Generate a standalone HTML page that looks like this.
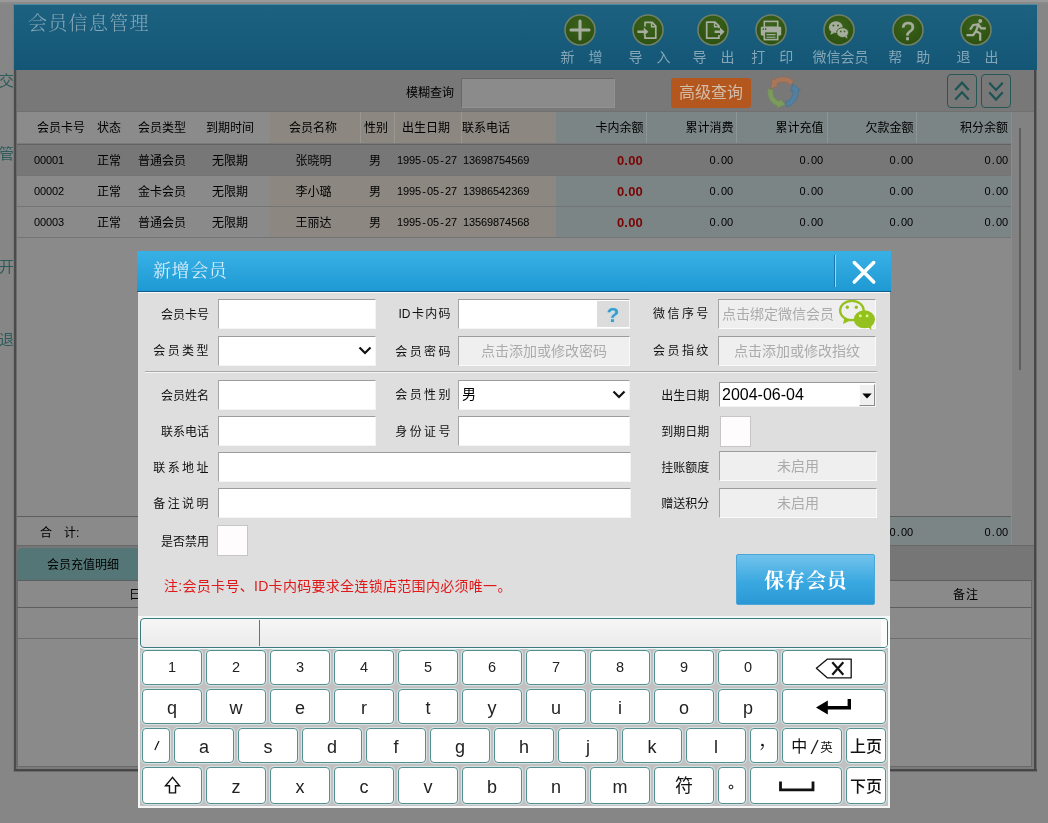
<!DOCTYPE html>
<html lang="zh-CN">
<head>
<meta charset="utf-8">
<title>会员信息管理</title>
<style>
*{box-sizing:border-box;margin:0;padding:0}
html,body{width:1048px;height:823px;overflow:hidden}
#win,#modal,#side{will-change:transform}
body{position:relative;background:#868686;font-family:"Liberation Sans","Noto Sans CJK SC",sans-serif;font-size:12px;color:#000}
.abs,.abs>div,.abs>span,.row>div{position:absolute}

#topstrip{left:0;top:0;width:1048px;height:4px;background:linear-gradient(#9b9b9b,#999 40%,#8b8b8b 55%,#8a8a8a)}
#side span{position:absolute;left:0;color:#2d5b5b;font-size:15px;line-height:20px;margin-top:-1px;margin-left:-1px}
#win{left:13px;top:4px;width:1024px;height:768px;background:#7b7b7b}
#hdr{left:0;top:0;width:1024px;height:66px;background:linear-gradient(#1d6181,#135676);border-left:1px solid #4f88a3;border-top:1px solid #4f88a3}
#hdr .title{left:14px;top:5px;letter-spacing:1.3px;font-family:"Liberation Serif","Noto Serif CJK SC",serif;font-weight:300;font-size:19px;line-height:28px;color:#86a8b8;white-space:nowrap}
.tb{position:absolute;top:9px;margin-left:-1px;width:80px;text-align:center;color:#84a6b6;white-space:nowrap}
.tb svg{display:block;margin:0 auto;width:32px;height:32px}
.tb .lb{display:block;margin-top:2px;line-height:18px;font-size:14px;padding-left:2px}
#lborder{left:1px;top:66px;width:3px;height:701px;background:linear-gradient(90deg,#4e4e4e,#494949 66%,#6c6c6c 67%)}
#rborder{left:1021px;top:66px;width:3px;height:702px;background:linear-gradient(90deg,#4a4a4a,#444 66%,#6a6a6a 67%)}
#bborder{left:1px;top:765px;width:1023px;height:3px;background:linear-gradient(#4a4a4a,#444 66%,#6a6a6a 67%)}
#bar{left:4px;top:66px;width:1017px;height:41px;background:#787878}
#grid{left:4px;top:107px;width:994px;height:434px;background:#8a8a8a}
.th{top:0;height:34px;line-height:34px;font-size:12px;white-space:nowrap}
.hl{top:0;width:1px;height:32px;background:#999}
.row{left:0;width:994px;height:31px}
.cell{top:1px;height:31px;line-height:31px;white-space:nowrap;font-size:12px}
.r{text-align:right}.c{text-align:center}
.cell.num,.num{font-family:"Liberation Sans","Noto Sans CJK SC",sans-serif;font-size:11px;letter-spacing:-0.1px;color:#000}
.num i{font-style:normal;padding:0 1.2px}
.row>.cell.num{line-height:29px}
/* modal */
#modal{left:137px;top:251px;width:754px;height:557px}
#mbody{left:1px;top:41px;width:752px;height:516px;background:#dedede;border-top:1.5px solid #fafafa}
#mtitle{left:0;top:0;width:754px;height:41px;background:linear-gradient(#37b1e5,#1f99d3);border-bottom:1px solid #115a8a}
#mtitle .t{left:16px;top:7px;letter-spacing:.6px;font-family:"Liberation Serif","Noto Serif CJK SC",serif;font-size:18px;line-height:26px;color:#d8effb}
.lab{height:30px;line-height:30px;font-size:12px;text-align:right;white-space:nowrap;color:#111}
.sp{letter-spacing:2.3px;margin-right:-2.3px}
.inp{height:30px;background:#fff;border:1px solid;border-color:#9c9c9c #f4f4f4 #f4f4f4 #a6a6a6}
.dis{height:30px;background:#efefef;border:1px solid;border-color:#9c9c9c #fafafa #fafafa #a6a6a6;color:#ababab;font-size:14px;line-height:28px;text-align:center;white-space:nowrap}
.chk{width:31px;height:31px;background:#fefcfd;border:1px solid #c6c6c6}
#kb>.key{background:#fff;border:1px solid #528f8f;border-radius:4px;text-align:center;font-size:18px;color:#222;padding-top:2px;box-shadow:0 0 0 1px rgba(235,252,252,.55)}
#kb>.key.dg{font-size:14.5px;padding-top:0}
#kb>.key.cj{padding-top:1px;font-size:16px;font-family:"Liberation Sans","Noto Sans CJK SC",sans-serif;color:#111}
#kb>.key.pg{font-size:16px;font-weight:500}
#kb>.key.fu{font-size:18px}
.key span{position:static}
</style>
</head>
<body>
<div id="topstrip" class="abs"></div>
<div id="side"><span style="top:72px">交</span><span style="top:145px">管</span><span style="top:258px">开</span><span style="top:331px">退</span></div>
<div id="win" class="abs">
<div id="hdr" class="abs"><div class="title">会员信息管理</div>
<div class="tb" style="left:527.4px"><svg viewBox="0 0 32 32"><defs><radialGradient id="gg" cx="50%" cy="35%" r="70%"><stop offset="0" stop-color="#3b631a"/><stop offset="1" stop-color="#2c4f10"/></radialGradient></defs><circle cx="16" cy="16" r="15" fill="url(#gg)" stroke="#6f8066" stroke-width="1.6"/><path d="M16 7v18M7 16h18" stroke="#a7ae9f" stroke-width="3.1" stroke-linecap="round" fill="none"/></svg><span class="lb">新　增</span></div>
<div class="tb" style="left:595.4px"><svg viewBox="0 0 32 32"><defs><radialGradient id="gg" cx="50%" cy="35%" r="70%"><stop offset="0" stop-color="#3b631a"/><stop offset="1" stop-color="#2c4f10"/></radialGradient></defs><circle cx="16" cy="16" r="15" fill="url(#gg)" stroke="#6f8066" stroke-width="1.6"/><path d="M13 12.5V8.3h7.2l3.6 3.9v12H13V21" fill="none" stroke="#a7ae9f" stroke-width="1.7" stroke-linejoin="round"/><path d="M19.6 8.6v4.2h3.9" fill="none" stroke="#a7ae9f" stroke-width="1.5"/><path d="M5.4 16.4h6.4v-2.9l4.6 4.2-4.6 4.2V19H5.4z" fill="#a7ae9f"/></svg><span class="lb">导　入</span></div>
<div class="tb" style="left:659.5px"><svg viewBox="0 0 32 32"><defs><radialGradient id="gg" cx="50%" cy="35%" r="70%"><stop offset="0" stop-color="#3b631a"/><stop offset="1" stop-color="#2c4f10"/></radialGradient></defs><circle cx="16" cy="16" r="15" fill="url(#gg)" stroke="#6f8066" stroke-width="1.6"/><path d="M22 14.2v-2L18 8.2H9.7v16H22v-3.3" fill="none" stroke="#a7ae9f" stroke-width="1.7" stroke-linejoin="round"/><path d="M17.6 8.6v4.2H22" fill="none" stroke="#a7ae9f" stroke-width="1.5"/><path d="M17.6 16.4h5.4v-2.9l4.6 4.2-4.6 4.2V19h-5.4z" fill="#a7ae9f"/></svg><span class="lb">导　出</span></div>
<div class="tb" style="left:718.3px"><svg viewBox="0 0 32 32"><defs><radialGradient id="gg" cx="50%" cy="35%" r="70%"><stop offset="0" stop-color="#3b631a"/><stop offset="1" stop-color="#2c4f10"/></radialGradient></defs><circle cx="16" cy="16" r="15" fill="url(#gg)" stroke="#6f8066" stroke-width="1.6"/><rect x="9.3" y="7.4" width="13.4" height="6" fill="none" stroke="#a7ae9f" stroke-width="1.6"/><rect x="5.8" y="12.8" width="20.4" height="8.6" rx="1" fill="#a7ae9f"/><rect x="9.3" y="17.6" width="13.4" height="8" fill="#38601a" stroke="#a7ae9f" stroke-width="1.6"/><path d="M11.5 20.6h9M11.5 23.2h9" stroke="#a7ae9f" stroke-width="1.1"/><rect x="7.6" y="14.4" width="1.4" height="1.4" fill="#38601a"/><rect x="10" y="14.4" width="1.4" height="1.4" fill="#38601a"/></svg><span class="lb">打　印</span></div>
<div class="tb" style="left:785.5px"><svg viewBox="0 0 32 32"><defs><radialGradient id="gg" cx="50%" cy="35%" r="70%"><stop offset="0" stop-color="#3b631a"/><stop offset="1" stop-color="#2c4f10"/></radialGradient></defs><circle cx="16" cy="16" r="15" fill="url(#gg)" stroke="#6f8066" stroke-width="1.6"/><ellipse cx="12.8" cy="13.2" rx="6.9" ry="5.9" fill="#a7ae9f"/><path d="M8.6 17.2l-1.3 3.6 4-1.8z" fill="#a7ae9f"/><ellipse cx="19.6" cy="18.6" rx="5.9" ry="4.9" fill="#a7ae9f" stroke="#38601a" stroke-width="1"/><path d="M21.6 22.6l2.8 2.2-.4-3.4z" fill="#a7ae9f"/><circle cx="10.4" cy="11.6" r="1" fill="#38601a"/><circle cx="15" cy="11.6" r="1" fill="#38601a"/><circle cx="17.8" cy="17.4" r=".85" fill="#38601a"/><circle cx="21.5" cy="17.4" r=".85" fill="#38601a"/></svg><span class="lb" style="padding-left:4px">微信会员</span></div>
<div class="tb" style="left:855.2px"><svg viewBox="0 0 32 32"><defs><radialGradient id="gg" cx="50%" cy="35%" r="70%"><stop offset="0" stop-color="#3b631a"/><stop offset="1" stop-color="#2c4f10"/></radialGradient></defs><circle cx="16" cy="16" r="15" fill="url(#gg)" stroke="#6f8066" stroke-width="1.6"/><text x="16" y="25.6" font-family="Liberation Sans,sans-serif" font-size="25" text-anchor="middle" fill="#a7ae9f" stroke="#a7ae9f" stroke-width=".5">?</text></svg><span class="lb">帮　助</span></div>
<div class="tb" style="left:923.4px"><svg viewBox="0 0 32 32"><defs><radialGradient id="gg" cx="50%" cy="35%" r="70%"><stop offset="0" stop-color="#3b631a"/><stop offset="1" stop-color="#2c4f10"/></radialGradient></defs><circle cx="16" cy="16" r="15" fill="url(#gg)" stroke="#6f8066" stroke-width="1.6"/><circle cx="20.2" cy="6.9" r="2" fill="#a7ae9f"/><path d="M18.4 10.4l-5.2.6-2.6 3.8M18.4 10.4l-2.4 6.6 4.2 2.6v6M15.8 17.4l-2.6 3.8H7.6M18.6 11l2.6 3.4h3.6" fill="none" stroke="#a7ae9f" stroke-width="2.2" stroke-linecap="square" stroke-linejoin="miter"/></svg><span class="lb">退　出</span></div>
</div>
<div id="bar" class="abs">
<div style="left:389px;top:13px;height:20px;line-height:20px;font-size:12px">模糊查询</div>
<div style="left:444px;top:8px;width:154px;height:30px;background:#8b8b8b;border:1px solid;border-color:#686868 #929292 #929292 #686868"></div>
<div style="left:654px;top:8px;width:80px;height:30px;background:#b4571e;border-radius:3px;color:#d3bda9;font-size:16px;line-height:30px;text-align:center">高级查询</div>
<svg style="position:absolute;left:747.9px;top:3.5px" width="36" height="36" viewBox="0 0 36 36"><path d="M29.01 7.37A15.3 15.3 0 0 0 8.58 5.94L7.16 4.13L5.68 14.93L13.20 11.85L11.78 10.04A10.1 10.1 0 0 1 25.27 10.98Z" fill="#a8775b" stroke="#8f6a54" stroke-width=".7" stroke-linejoin="round"/><path d="M3.03 14.82A15.3 15.3 0 0 0 12.27 32.19L11.41 34.32L20.64 30.42L15.08 25.23L14.22 27.36A10.1 10.1 0 0 1 8.12 15.90Z" fill="#7c9a5e" stroke="#6d8754" stroke-width=".7" stroke-linejoin="round"/><path d="M21.70 32.85A15.3 15.3 0 0 0 33.22 16.40L35.50 16.16L27.73 9.84L25.76 17.18L28.04 16.94A10.1 10.1 0 0 1 20.44 27.80Z" fill="#5280a2" stroke="#466f8e" stroke-width=".7" stroke-linejoin="round"/></svg>
<div style="left:930px;top:4px;width:30px;height:34px;border:1px solid #265656;border-radius:4px"><svg width="28" height="32" viewBox="0 0 29 33.2" style="display:block"><path d="M7.5 15.5l7-7.5 7 7.5M7.5 25.5l7-7.5 7 7.5" fill="none" stroke="#1c5454" stroke-width="2.3"/></svg></div>
<div style="left:964px;top:4px;width:30px;height:34px;border:1px solid #265656;border-radius:4px"><svg width="28" height="32" viewBox="0 0 29 33.2" style="display:block"><path d="M7.5 8l7 7.5 7-7.5M7.5 18l7 7.5 7-7.5" fill="none" stroke="#1c5454" stroke-width="2.3"/></svg></div>
</div>
<div id="grid" class="abs">
<div style="left:0;top:0;width:994px;height:34px;background:#8b8b8b"></div>
<div style="left:253px;top:1px;width:286px;height:125px;background:#8c8781"></div>
<div style="left:539px;top:1px;width:455px;height:125px;background:#7c8585"></div>
<div class="hl" style="left:343px;top:1px;background:rgba(255,255,255,.13)"></div>
<div class="hl" style="left:377px;top:1px;background:rgba(255,255,255,.13)"></div>
<div class="hl" style="left:444px;top:1px;background:rgba(255,255,255,.13)"></div>
<div class="hl" style="left:629px;top:1px;background:rgba(255,255,255,.13)"></div>
<div class="hl" style="left:719px;top:1px;background:rgba(255,255,255,.13)"></div>
<div class="hl" style="left:810px;top:1px;background:rgba(255,255,255,.13)"></div>
<div class="hl" style="left:899px;top:1px;background:rgba(255,255,255,.13)"></div>
<div style="left:0;top:0;width:1017px;height:1px;background:#707070"></div><div style="left:0;top:32px;width:994px;height:1px;background:#7a7a7a"></div><div style="left:0;top:33px;width:994px;height:1px;background:#626262"></div>
<div class="th" style="left:20.0px">会员卡号</div>
<div class="th" style="left:80.0px">状态</div>
<div class="th" style="left:121.0px">会员类型</div>
<div class="th" style="left:189.0px">到期时间</div>
<div class="th" style="left:272.0px">会员名称</div>
<div class="th" style="left:347.0px">性别</div>
<div class="th" style="left:385.0px">出生日期</div>
<div class="th" style="left:445.0px">联系电话</div>
<div class="th r" style="left:566.5px;width:60px">卡内余额</div>
<div class="th r" style="left:656.5px;width:60px">累计消费</div>
<div class="th r" style="left:746.5px;width:60px">累计充值</div>
<div class="th r" style="left:836.5px;width:60px">欠款金额</div>
<div class="th r" style="left:931.0px;width:60px">积分余额</div>
<div class="row" style="top:34px;background:#777;border-bottom:1px solid #747474">
<div class="cell num" style="left:17px">00001</div>
<div class="cell" style="left:80px">正常</div>
<div class="cell" style="left:121px">普通会员</div>
<div class="cell" style="left:195px">无限期</div>
<div class="cell c" style="left:252px;width:89px">张晓明</div>
<div class="cell" style="left:352px">男</div>
<div class="cell num" style="left:380px">1995<i>-</i>05<i>-</i>27</div>
<div class="cell num" style="left:446px">13698754569</div>
<div class="cell r" style="left:566px;width:60px;color:#7a0303;font-weight:bold;font-family:'Liberation Sans',sans-serif;font-size:13px;line-height:29px;letter-spacing:.2px">0.00</div>
<div class="cell r num" style="left:656px;width:60px">0<i>.</i>00</div>
<div class="cell r num" style="left:746px;width:60px">0<i>.</i>00</div>
<div class="cell r num" style="left:836px;width:60px">0<i>.</i>00</div>
<div class="cell r num" style="left:931px;width:60px">0<i>.</i>00</div>
</div>
<div class="row" style="top:65px;border-bottom:1px solid #747474">
<div class="cell num" style="left:17px">00002</div>
<div class="cell" style="left:80px">正常</div>
<div class="cell" style="left:121px">金卡会员</div>
<div class="cell" style="left:195px">无限期</div>
<div class="cell c" style="left:252px;width:89px">李小璐</div>
<div class="cell" style="left:352px">男</div>
<div class="cell num" style="left:380px">1995<i>-</i>05<i>-</i>27</div>
<div class="cell num" style="left:446px">13986542369</div>
<div class="cell r" style="left:566px;width:60px;color:#7a0303;font-weight:bold;font-family:'Liberation Sans',sans-serif;font-size:13px;line-height:29px;letter-spacing:.2px">0.00</div>
<div class="cell r num" style="left:656px;width:60px">0<i>.</i>00</div>
<div class="cell r num" style="left:746px;width:60px">0<i>.</i>00</div>
<div class="cell r num" style="left:836px;width:60px">0<i>.</i>00</div>
<div class="cell r num" style="left:931px;width:60px">0<i>.</i>00</div>
</div>
<div class="row" style="top:96px;border-bottom:1px solid #747474">
<div class="cell num" style="left:17px">00003</div>
<div class="cell" style="left:80px">正常</div>
<div class="cell" style="left:121px">普通会员</div>
<div class="cell" style="left:195px">无限期</div>
<div class="cell c" style="left:252px;width:89px">王丽达</div>
<div class="cell" style="left:352px">男</div>
<div class="cell num" style="left:380px">1995<i>-</i>05<i>-</i>27</div>
<div class="cell num" style="left:446px">13569874568</div>
<div class="cell r" style="left:566px;width:60px;color:#7a0303;font-weight:bold;font-family:'Liberation Sans',sans-serif;font-size:13px;line-height:29px;letter-spacing:.2px">0.00</div>
<div class="cell r num" style="left:656px;width:60px">0<i>.</i>00</div>
<div class="cell r num" style="left:746px;width:60px">0<i>.</i>00</div>
<div class="cell r num" style="left:836px;width:60px">0<i>.</i>00</div>
<div class="cell r num" style="left:931px;width:60px">0<i>.</i>00</div>
</div>
<div style="left:0;top:405px;width:994px;height:29px;border-top:1px solid #5e5e5e"></div>
<div style="left:539px;top:406px;width:455px;height:28px;background:#7c8585"></div>
<div style="left:23px;top:406px;height:28px;line-height:32px;font-size:12px;white-space:pre">合　计:</div>
<div class="cell r num" style="top:406px;height:28px;line-height:30px;left:836px;width:60px">0<i>.</i>00</div>
<div class="cell r num" style="top:406px;height:28px;line-height:30px;left:931px;width:60px">0<i>.</i>00</div>
</div>
<div class="abs" style="left:998px;top:108px;width:23px;height:433px;background:#828282;border-left:1px solid #8c8c8c"></div>
<div class="abs" style="left:1006px;top:124px;width:2px;height:242px;background:#5f5f5f"></div>
<div class="abs" style="left:4px;top:541px;width:1017px;height:36px;background:#767676;border-top:1px solid #686868"></div>
<div class="abs" style="left:4px;top:544px;width:140px;height:33px;background:#557676;border-radius:5px 0 0 0;font-size:12px;line-height:35px;padding-left:30px">会员充值明细</div>
<div class="abs" style="left:4px;top:576px;width:1015px;height:187px;background:#8a8a8a;border:1px solid #6a6a6a;border-top-color:#5e5e5e"></div>
<div class="abs" style="left:4px;top:603px;width:1015px;height:1px;background:#5e5e5e"></div>
<div class="abs" style="left:4px;top:634px;width:1015px;height:1px;background:#6e6e6e"></div>
<div class="abs" style="left:116px;top:578px;height:26px;line-height:26px">日</div>
<div class="abs" style="left:940px;top:578px;height:26px;line-height:26px;letter-spacing:1px">备注</div>
<div id="lborder" class="abs"></div><div id="rborder" class="abs"></div><div id="bborder" class="abs"></div>
</div>
<div id="modal" class="abs"><div id="mbody"></div>
<div id="mtitle" class="abs"><div class="t">新增会员</div><div style="left:697px;top:4px;width:1px;height:32px;background:#1a78ac"></div><div style="left:698px;top:4px;width:1px;height:32px;background:#8adcfb"></div><svg style="position:absolute;left:713px;top:8px" width="28" height="28" viewBox="0 0 28 28"><path d="M4.3 3.6l19.4 19.4M23.7 3.6L4.3 23" stroke="#fdffff" stroke-width="3.6" stroke-linecap="round" fill="none"/></svg></div>
<div class="abs" style="left:0;top:0">
<div class="lab" style="left:-8.0px;top:49.0px;width:80px">会员卡号</div>
<div class="inp" style="left:81px;top:48px;width:158px;height:30px;"></div>
<div class="lab" style="left:233.5px;top:48.0px;width:80px"><span style="margin-right:1.5px">ID</span><span style="letter-spacing:1.3px;margin-right:-1.3px">卡内码</span></div>
<div class="inp" style="left:321px;top:48px;width:172px;height:30px;"></div>
<div style="left:460px;top:50px;width:32px;height:26px;background:#dcdcdc;color:#3a9ccd;font-weight:bold;font-size:21px;line-height:27px;text-align:center;text-shadow:0 0 2px #9fe0ff">?</div>
<div class="lab" style="left:491.3px;top:48.0px;width:80px"><span style="letter-spacing:2.4px;margin-right:-2.4px">微信序号</span></div>
<div class="dis" style="left:581px;top:48px;width:158px;height:30px;line-height:28px;text-align:left;padding-left:3px">点击绑定微信会员</div>
<svg style="position:absolute;left:701px;top:48px" width="38" height="32" viewBox="0 0 38 32"><path d="M6.3 19.2L5 24.9l6.4-3z" fill="#95c11f"/><ellipse cx="13.9" cy="11.5" rx="11.8" ry="9.6" fill="#efefef" stroke="#95c11f" stroke-width="2.3"/><circle cx="9.3" cy="8.2" r="1.7" fill="#95c11f"/><circle cx="18.3" cy="8.2" r="1.7" fill="#95c11f"/><ellipse cx="26.4" cy="20.3" rx="10.6" ry="9" fill="#95c11f"/><path d="M29.2 27.6l4.2 3.4-.4-6z" fill="#95c11f"/><circle cx="22.3" cy="16.9" r="1.4" fill="#dcff8a"/><circle cx="29.1" cy="16.9" r="1.4" fill="#dcff8a"/></svg>
<div class="lab" style="left:-8.5px;top:85.0px;width:80px"><span style="letter-spacing:2.4px;margin-right:-2.4px">会员类型</span></div>
<div class="inp" style="left:81px;top:85px;width:158px;height:30px;"></div>
<div style="left:216px;top:85px;width:24px;height:30px"><svg style="position:absolute;right:5px;top:10px" width="14" height="10" viewBox="0 0 14 10"><path d="M1.5 1.5l5.5 5.5 5.5-5.5" fill="none" stroke="#111" stroke-width="2.2"/></svg></div>
<div class="lab" style="left:233.5px;top:86.0px;width:80px"><span style="letter-spacing:2.4px;margin-right:-2.4px">会员密码</span></div>
<div class="dis" style="left:321px;top:85px;width:172px;height:30px;line-height:28px;">点击添加或修改密码</div>
<div class="lab" style="left:491.3px;top:85.0px;width:80px"><span style="letter-spacing:2.4px;margin-right:-2.4px">会员指纹</span></div>
<div class="dis" style="left:581px;top:85px;width:158px;height:30px;line-height:28px;">点击添加或修改指纹</div>
<div style="left:8px;top:120px;width:732px;height:1px;background:#a9a9a9"></div><div style="left:8px;top:121px;width:732px;height:1px;background:#f4f4f4"></div>
<div class="lab" style="left:-8.0px;top:130.0px;width:80px">会员姓名</div>
<div class="inp" style="left:81px;top:129px;width:158px;height:30px;"></div>
<div class="lab" style="left:233.5px;top:129.0px;width:80px"><span style="letter-spacing:2.4px;margin-right:-2.4px">会员性别</span></div>
<div class="inp" style="left:321px;top:129px;width:172px;height:30px;"></div>
<div style="left:325px;top:129px;font-size:14px;line-height:28px">男</div>
<div style="left:470px;top:129px;width:24px;height:30px"><svg style="position:absolute;right:5px;top:10px" width="14" height="10" viewBox="0 0 14 10"><path d="M1.5 1.5l5.5 5.5 5.5-5.5" fill="none" stroke="#111" stroke-width="2.2"/></svg></div>
<div class="lab" style="left:492.3px;top:130.0px;width:80px">出生日期</div>
<div class="inp" style="left:582px;top:131px;width:157px;height:25px;font-size:16px;line-height:24px;padding-left:2px;border-color:#9a9a9a #f4f4f4 #f4f4f4 #9a9a9a">2004-06-04</div>
<div style="left:722px;top:133px;width:16px;height:22px;background:#f0f0f0;border:1px solid;border-color:#fdfdfd #8a8a8a #8a8a8a #fdfdfd"><svg width="14" height="20" viewBox="0 0 14 20" style="display:block"><path d="M2.3 8.4h9.4l-4.7 5z" fill="#000"/></svg></div>
<div class="lab" style="left:-8.0px;top:166.0px;width:80px">联系电话</div>
<div class="inp" style="left:81px;top:165px;width:158px;height:30px;"></div>
<div class="lab" style="left:233.5px;top:166.0px;width:80px"><span style="letter-spacing:2.4px;margin-right:-2.4px">身份证号</span></div>
<div class="inp" style="left:321px;top:165px;width:172px;height:30px;"></div>
<div class="lab" style="left:492.3px;top:166.0px;width:80px">到期日期</div>
<div class="chk" style="left:583px;top:165px"></div>
<div class="lab" style="left:-8.5px;top:202.0px;width:80px"><span style="letter-spacing:2.4px;margin-right:-2.4px">联系地址</span></div>
<div class="inp" style="left:81px;top:201px;width:413px;height:30px;"></div>
<div class="lab" style="left:492.3px;top:202.0px;width:80px">挂账额度</div>
<div class="dis" style="left:582px;top:200px;width:158px;height:30px;line-height:28px;">未启用</div>
<div class="lab" style="left:-8.5px;top:238.0px;width:80px"><span style="letter-spacing:2.4px;margin-right:-2.4px">备注说明</span></div>
<div class="inp" style="left:81px;top:237px;width:413px;height:30px;"></div>
<div class="lab" style="left:492.3px;top:238.0px;width:80px">赠送积分</div>
<div class="dis" style="left:582px;top:237px;width:158px;height:30px;line-height:28px;">未启用</div>
<div class="lab" style="left:-8.0px;top:276.0px;width:80px">是否禁用</div>
<div class="chk" style="left:80px;top:274px"></div>
<div style="left:27px;top:326px;color:#e01818;font-size:14px;line-height:18px;letter-spacing:.3px;white-space:nowrap">注:会员卡号、ID卡内码要求全连锁店范围内必须唯一。</div>
<div style="left:599px;top:303px;width:139px;height:51px;background:linear-gradient(#72c3ec,#3aa8e0 55%,#2a98d4);border:1px solid #4aa6d6;border-radius:2px;color:#fff;font-family:'Liberation Serif','Noto Serif CJK SC',serif;font-weight:bold;font-size:20px;line-height:52px;letter-spacing:.8px;text-indent:.8px;text-align:center">保存会员</div>
</div>
<div class="abs" style="left:1px;top:365px;width:752px;height:192px;background:#f6f6f6"></div>
<div class="abs" style="left:3px;top:397px;width:748px;height:158px;background:#c1c1c1"></div>
<div id="kb" class="abs" style="left:0;top:0">
<div style="left:3px;top:367px;width:748px;height:30px;border:1px solid #3d7c7c;border-radius:4px;background:linear-gradient(#f6f6f6,#ebebeb);box-shadow:0 0 0 1px #eefcfc"></div>
<div style="left:122px;top:369px;width:1px;height:26px;background:#3f8585"></div>
<div style="left:744px;top:368px;width:6px;height:28px;background:#fcfcfc;border-radius:0 3px 3px 0"></div>
<div class="key dg" style="left:5px;top:399px;width:60px;height:35px;line-height:33px;">1</div>
<div class="key dg" style="left:69px;top:399px;width:60px;height:35px;line-height:33px;">2</div>
<div class="key dg" style="left:133px;top:399px;width:60px;height:35px;line-height:33px;">3</div>
<div class="key dg" style="left:197px;top:399px;width:60px;height:35px;line-height:33px;">4</div>
<div class="key dg" style="left:261px;top:399px;width:60px;height:35px;line-height:33px;">5</div>
<div class="key dg" style="left:325px;top:399px;width:60px;height:35px;line-height:33px;">6</div>
<div class="key dg" style="left:389px;top:399px;width:60px;height:35px;line-height:33px;">7</div>
<div class="key dg" style="left:453px;top:399px;width:60px;height:35px;line-height:33px;">8</div>
<div class="key dg" style="left:517px;top:399px;width:60px;height:35px;line-height:33px;">9</div>
<div class="key dg" style="left:581px;top:399px;width:60px;height:35px;line-height:33px;">0</div>
<div class="key " style="left:645px;top:399px;width:104px;height:35px;line-height:33px;"><svg width="38" height="21" viewBox="0 0 38 21" style="position:absolute;left:32px;top:7px"><path d="M12.2 1.2H36.2V19.8H12.2L1.4 10.2z" fill="#fff" stroke="#111" stroke-width="1.3" stroke-linejoin="round"/><path d="M17.3 4.2l11 12.6M28.3 4.2l-11 12.6" stroke="#111" stroke-width="2.2"/></svg></div>
<div class="key " style="left:5px;top:438px;width:60px;height:35px;line-height:33px;">q</div>
<div class="key " style="left:69px;top:438px;width:60px;height:35px;line-height:33px;">w</div>
<div class="key " style="left:133px;top:438px;width:60px;height:35px;line-height:33px;">e</div>
<div class="key " style="left:197px;top:438px;width:60px;height:35px;line-height:33px;">r</div>
<div class="key " style="left:261px;top:438px;width:60px;height:35px;line-height:33px;">t</div>
<div class="key " style="left:325px;top:438px;width:60px;height:35px;line-height:33px;">y</div>
<div class="key " style="left:389px;top:438px;width:60px;height:35px;line-height:33px;">u</div>
<div class="key " style="left:453px;top:438px;width:60px;height:35px;line-height:33px;">i</div>
<div class="key " style="left:517px;top:438px;width:60px;height:35px;line-height:33px;">o</div>
<div class="key " style="left:581px;top:438px;width:60px;height:35px;line-height:33px;">p</div>
<div class="key " style="left:645px;top:438px;width:104px;height:35px;line-height:33px;"><svg width="38" height="18" viewBox="0 0 38 18" style="position:absolute;left:32px;top:8px"><path d="M34.3 1v8.8H10" fill="none" stroke="#000" stroke-width="3.4"/><path d="M1 9.6l11.8-7v14z" fill="#000"/></svg></div>
<div class="key " style="left:5px;top:477px;width:28px;height:35px;line-height:33px;"><svg width="8" height="12" viewBox="0 0 8 12" style="position:absolute;left:10px;top:11px"><path d="M6 1L1.8 10" stroke="#111" stroke-width="1.2" fill="none"/></svg></div>
<div class="key " style="left:37px;top:477px;width:60px;height:35px;line-height:33px;">a</div>
<div class="key " style="left:101px;top:477px;width:60px;height:35px;line-height:33px;">s</div>
<div class="key " style="left:165px;top:477px;width:60px;height:35px;line-height:33px;">d</div>
<div class="key " style="left:229px;top:477px;width:60px;height:35px;line-height:33px;">f</div>
<div class="key " style="left:293px;top:477px;width:60px;height:35px;line-height:33px;">g</div>
<div class="key " style="left:357px;top:477px;width:60px;height:35px;line-height:33px;">h</div>
<div class="key " style="left:421px;top:477px;width:60px;height:35px;line-height:33px;">j</div>
<div class="key " style="left:485px;top:477px;width:60px;height:35px;line-height:33px;">k</div>
<div class="key " style="left:549px;top:477px;width:60px;height:35px;line-height:33px;">l</div>
<div class="key cj" style="left:613px;top:477px;width:28px;height:35px;line-height:33px;"><svg width="8" height="10" viewBox="0 0 8 10" style="position:absolute;left:8px;top:13px"><path d="M4.3 3.2C4.5 5.2 3.6 6.8 2 7.6" fill="none" stroke="#111" stroke-width="1" stroke-linecap="round"/><circle cx="3.4" cy="2.9" r="1.25" fill="#111"/></svg></div>
<div class="key cj" style="left:645px;top:477px;width:60px;height:35px;line-height:33px;"><span style="font-size:16px">中</span><svg width="9" height="16" viewBox="0 0 9 16" style="margin:0 1px 0 3px;vertical-align:-3px"><path d="M8 1L1.2 15" stroke="#222" stroke-width="1.4" fill="none"/></svg><span style="font-size:12.5px">英</span></div>
<div class="key cj pg" style="left:709px;top:477px;width:40px;height:35px;line-height:33px;">上页</div>
<div class="key " style="left:5px;top:516px;width:60px;height:37px;line-height:35px;"><svg width="17" height="19" viewBox="0 0 18 20" style="position:absolute;left:21px;top:8px"><path d="M9 1.4L1.6 10.2h4.2v7.6h6.4v-7.6h4.2z" fill="#fff" stroke="#111" stroke-width="1.5" stroke-linejoin="miter"/></svg></div>
<div class="key " style="left:69px;top:516px;width:60px;height:37px;line-height:35px;">z</div>
<div class="key " style="left:133px;top:516px;width:60px;height:37px;line-height:35px;">x</div>
<div class="key " style="left:197px;top:516px;width:60px;height:37px;line-height:35px;">c</div>
<div class="key " style="left:261px;top:516px;width:60px;height:37px;line-height:35px;">v</div>
<div class="key " style="left:325px;top:516px;width:60px;height:37px;line-height:35px;">b</div>
<div class="key " style="left:389px;top:516px;width:60px;height:37px;line-height:35px;">n</div>
<div class="key " style="left:453px;top:516px;width:60px;height:37px;line-height:35px;">m</div>
<div class="key cj fu" style="left:517px;top:516px;width:60px;height:37px;line-height:35px;">符</div>
<div class="key cj" style="left:581px;top:516px;width:28px;height:37px;line-height:35px;"><svg width="8" height="8" viewBox="0 0 8 8" style="position:absolute;left:8px;top:15px"><circle cx="4" cy="4" r="1.9" fill="none" stroke="#111" stroke-width="1"/></svg></div>
<div class="key " style="left:613px;top:516px;width:92px;height:37px;line-height:35px;"><svg width="38" height="12" viewBox="0 0 38 12" style="position:absolute;left:27px;top:13px"><path d="M2.5 0.5v8.3h32.5V0.5" fill="none" stroke="#111" stroke-width="2.8"/></svg></div>
<div class="key cj pg" style="left:709px;top:516px;width:40px;height:37px;line-height:35px;">下页</div>
</div>
</div>
</body>
</html>
